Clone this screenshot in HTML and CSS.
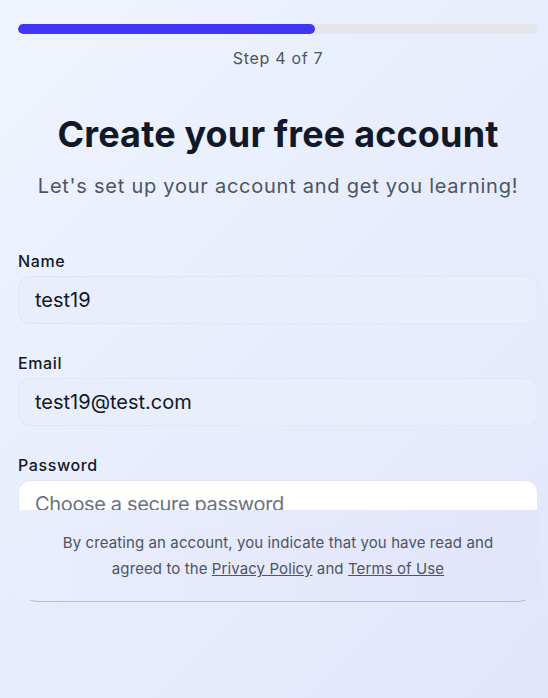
FILE: index.html
```html
<!DOCTYPE html>
<html lang="en">
<head>
<meta charset="utf-8">
<title>Create your free account</title>
<link rel="stylesheet" href="styles.css">
</head>
<body>
<main class="page">
  <div class="progress"><div class="progress-fill" style="width: 57.14%"></div></div>
  <p class="step">Step 4 of 7</p>
  <h1 class="title">Create your free account</h1>
  <p class="subtitle">Let's set up your account and get you learning!</p>
  <form class="form">
    <div class="field">
      <label class="label" for="name">Name</label>
      <input class="input" id="name" type="text" value="test19">
    </div>
    <div class="field">
      <label class="label" for="email">Email</label>
      <input class="input" id="email" type="email" value="test19@test.com">
    </div>
    <div class="field">
      <label class="label" for="password">Password</label>
      <input class="input input-white" id="password" type="password" placeholder="Choose a secure password">
    </div>
    <button class="submit" type="button" aria-label="Create account"></button>
  </form>
  <div class="legal">
    <p class="legal-text"><span class="legal-line">By creating an account, you indicate that you have read and</span> <span class="nowrap">agreed to the</span> <a href="#">Privacy Policy</a> <span class="nowrap">and</span> <a href="#">Terms of Use</a></p>
  </div>
</main>
</body>
</html>
```

FILE: styles.css
```css
* { box-sizing: border-box; }
html, body { margin: 0; height: 100%; }
body {
  font-family: Inter, "Noto Sans", sans-serif;
  background: linear-gradient(135deg, #eff4fe 0%, #e1e6fc 100%);
  color: #111827;
  overflow: hidden;
}
.page {
  position: relative;
  padding: 24px 10px 0 18px;
  min-height: 100%;
}
.progress {
  height: 10px;
  border-radius: 999px;
  background: #e4e6eb;
  overflow: hidden;
}
.progress-fill {
  height: 100%;
  border-radius: 999px;
  background: #4236f5;
}
.step {
  margin: 12px 0 0;
  text-align: center;
  font-size: 16px;
  line-height: 24px;
  letter-spacing: 0.7px;
  color: #4b5563;
}
.title {
  margin: 44px 0 0;
  text-align: center;
  font-size: 36px;
  line-height: 40px;
  font-weight: 700;
  color: #111827;
  letter-spacing: 0.15px;
}
.subtitle {
  margin: 18px 0 0;
  text-align: center;
  font-size: 20px;
  line-height: 28px;
  letter-spacing: 0.75px;
  color: #4b5563;
}
.form {
  margin-top: 49px;
  display: flex;
  flex-direction: column;
  gap: 27px;
}
.field {
  display: flex;
  flex-direction: column;
  gap: 3px;
}
.label {
  font-size: 16px;
  line-height: 24px;
  font-weight: 500;
  letter-spacing: 0.6px;
  color: #111827;
}
.input {
  height: 48px;
  border: 1px solid #e1e6f3;
  border-radius: 12px;
  background: #e8eefc;
  padding: 0 16px;
  font-family: inherit;
  font-size: 20px;
  color: #111827;
  outline: none;
}
.input-white {
  background: #ffffff;
}
.input::placeholder {
  color: #6b7280;
  letter-spacing: -0.35px;
}
.submit {
  height: 56px;
  margin-top: -9px;
  border: 1px solid #b3b1fa;
  border-radius: 20px;
  background: transparent;
}
.legal {
  position: absolute;
  top: 510px;
  left: 18px;
  width: 520px;
  height: 90px;
  padding-top: 20px;
  background: linear-gradient(90deg, rgba(233, 237, 252, 0.97), rgba(226, 229, 251, 0.97));
}
.legal-text {
  margin: 0 auto;
  max-width: 450px;
  text-align: center;
  font-size: 15px;
  line-height: 26px;
  letter-spacing: 0.1px;
  color: #4b5563;
}
.nowrap { white-space: nowrap; }
.legal-text a {
  color: #4b5563;
  text-decoration: underline;
}
```
